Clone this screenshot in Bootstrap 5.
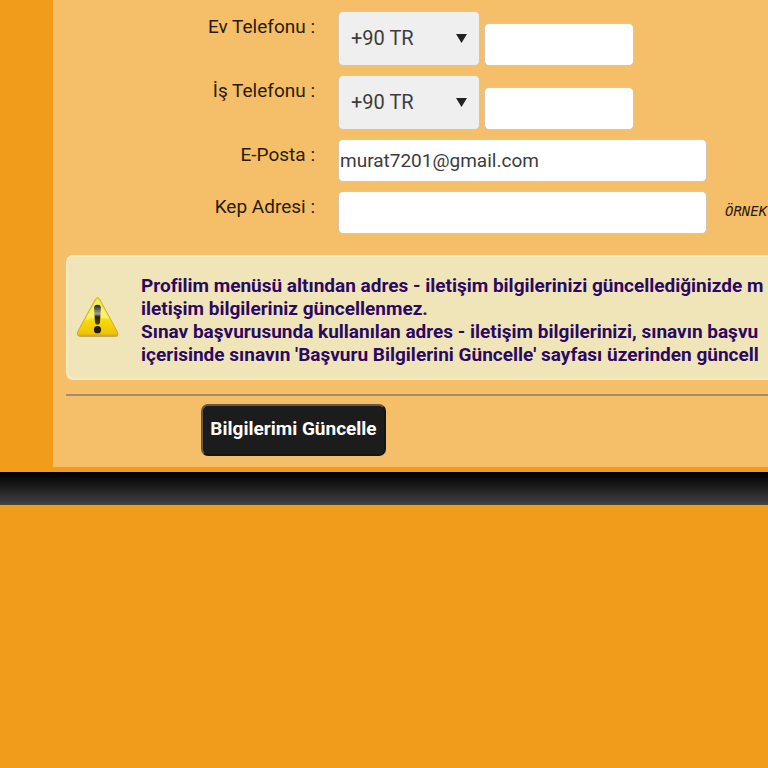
<!DOCTYPE html>
<html lang="tr">
<head>
<meta charset="utf-8">
<meta name="viewport" content="width=device-width, initial-scale=1">
<title>Bilgilerimi Güncelle</title>
<link href="https://cdn.jsdelivr.net/npm/bootstrap@5.3.0/dist/css/bootstrap.min.css" rel="stylesheet">
<style>
body { background: #f19c1a; font-family: Roboto, "Liberation Sans", sans-serif; font-size: 19px; line-height: 23px; color: #2a1a08; }
.page-area { padding-left: 53px; padding-bottom: 5px; }
.profile-panel { background: #f5be68; padding: 11px 0 11px 13px; }
.field-line { column-gap: 23px; margin-bottom: 9px; }
.field-label { width: 249px; padding-top: 4px; flex: none; }
.code-select, .field-box { border: 1px solid #d5c5ac; border-radius: 5px; color: #3c3c3c; font-size: 19px; }
.code-select { appearance: none; width: 142px; height: 55px; padding: 0 12px; font-size: 20px; background: #efefef url("data:image/svg+xml,%3Csvg xmlns='http://www.w3.org/2000/svg' viewBox='0 0 11 9'%3E%3Cpath d='M0 0h11L5.5 9z' fill='%23222'/%3E%3C/svg%3E") no-repeat right 12px center / 11px 9px; }
.field-box { height: 43px; background: #fff; padding: 0 1px; }
.phone-box { width: 150px; }
.mail-box { width: 369px; }
.sample-note { font: italic 14px/18px "DejaVu Sans Mono", monospace; padding-left: 18px; padding-bottom: 4px; }
.notice-box { background: #efe5b9; border: 2px solid #faeabf; border-right: 0; border-radius: 7px 0 0 7px; padding: 17px 0 12px 8px; margin-top: 21px; color: #2b0861; gap: 22px; }
.notice-icon { width: 43px; height: 43px; margin-bottom: 5px; }
.rule-line { border-top: 2px solid #a18e6c; margin: 14px 0 8px; opacity: 1; }
.update-btn { margin-left: 135px; width: 185px; height: 52px; padding: 0 0 3px; background: #1c1c1c; color: #fff; border: 2px solid #151515; border-top-color: #65594a; border-left-color: #65594a; border-radius: 7px; }
.footer-strip { height: 33px; background: linear-gradient(#000, #080808 15%, #3d3c3e 92%, #514632); }
</style>
</head>
<body class="overflow-x-hidden">
<main class="page-area overflow-hidden">
<form class="profile-panel">
  <div class="field-line d-flex">
    <label class="field-label text-end" for="homeCode">Ev Telefonu :</label>
    <div class="d-flex align-items-end gap-1">
      <select class="code-select" id="homeCode"><option>+90 TR</option></select>
      <input class="field-box phone-box" type="tel" aria-label="Ev Telefonu">
    </div>
  </div>
  <div class="field-line d-flex">
    <label class="field-label text-end" for="workCode">İş Telefonu :</label>
    <div class="d-flex align-items-end gap-1">
      <select class="code-select" id="workCode"><option>+90 TR</option></select>
      <input class="field-box phone-box" type="tel" aria-label="İş Telefonu">
    </div>
  </div>
  <div class="field-line d-flex">
    <label class="field-label text-end" for="mail">E-Posta :</label>
    <input class="field-box mail-box" id="mail" type="email" value="murat7201@gmail.com">
  </div>
  <div class="field-line d-flex">
    <label class="field-label text-end" for="kep">Kep Adresi :</label>
    <div class="d-flex align-items-center text-nowrap">
      <input class="field-box mail-box" id="kep" type="email">
      <span class="sample-note">ÖRNEK</span>
    </div>
  </div>
  <div class="notice-box d-flex align-items-center fw-bold text-nowrap" role="note">
    <svg class="notice-icon flex-shrink-0" viewBox="0 0 44 44" aria-hidden="true">
      <defs>
        <linearGradient id="sun" x1="0" y1="0" x2="0" y2="1"><stop offset="0" stop-color="#e8e226"/><stop offset=".5" stop-color="#fbee38"/><stop offset=".58" stop-color="#f8dc0c"/><stop offset="1" stop-color="#f0c000"/></linearGradient>
        <linearGradient id="ink" x1="0" y1="0" x2="0" y2="1"><stop offset="0" stop-color="#222"/><stop offset=".45" stop-color="#a5a58e"/><stop offset=".6" stop-color="#292507"/><stop offset="1" stop-color="#4b4206"/></linearGradient>
      </defs>
      <path d="M4 42h37q3-1 2-4H1q0 3 3 4z" fill="#a98a3d" opacity=".65"/>
      <path d="M20 3q2-3 4 0l18 33q2 4-2 4H4q-4 0-2-4z" fill="url(#sun)" stroke="#cfab25"/>
      <path d="M21 4q1-1 2 0l11 20q-12-4-24 1z" fill="#fff" opacity=".3"/>
      <path d="M18.500 12q0-3 3.500-3t3.500 3l-1 16q-2.500 3-5 0z" fill="url(#ink)"/>
      <circle cx="22" cy="34.500" r="3.700" fill="#211d04"/>
    </svg>
    <div>Profilim menüsü altından adres - iletişim bilgilerinizi güncellediğinizde m<br>iletişim bilgileriniz güncellenmez.<br>Sınav başvurusunda kullanılan adres - iletişim bilgilerinizi, sınavın başvu<br>içerisinde sınavın 'Başvuru Bilgilerini Güncelle' sayfası üzerinden güncell</div>
  </div>
  <hr class="rule-line">
  <button class="update-btn fw-bold d-block" type="button">Bilgilerimi Güncelle</button>
</form>
</main>
<footer class="footer-strip"></footer>
<script src="https://cdn.jsdelivr.net/npm/bootstrap@5.3.0/dist/js/bootstrap.bundle.min.js"></script>
</body>
</html>
